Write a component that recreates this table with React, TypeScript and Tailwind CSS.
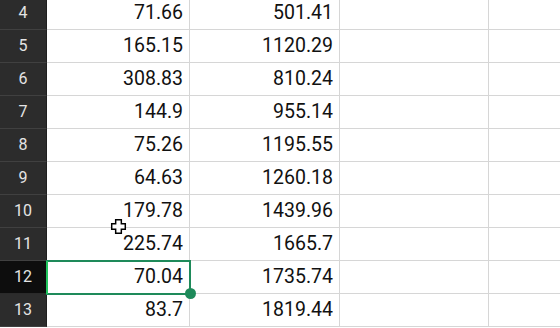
import React from "react";

const rows: [number, string, string][] = [
  [4, "71.66", "501.41"],
  [5, "165.15", "1120.29"],
  [6, "308.83", "810.24"],
  [7, "144.9", "955.14"],
  [8, "75.26", "1195.55"],
  [9, "64.63", "1260.18"],
  [10, "179.78", "1439.96"],
  [11, "225.74", "1665.7"],
  [12, "70.04", "1735.74"],
  [13, "83.7", "1819.44"],
];

export default function App() {
  return (
    <div
      className="relative w-[560px] h-[328px] overflow-hidden bg-white"
      style={{ fontFamily: "Roboto, 'Liberation Sans', sans-serif" }}
    >
      <div className="-mt-[3px] flex flex-col">
        {rows.map(([n, a, b]) => {
          const sel = n === 12;
          return (
            <div key={n} className="flex h-[33px]">
              <div
                className={
                  "w-[47px] shrink-0 flex items-center justify-center border-b border-r text-[16px] text-[#e4e4e4] " +
                  (sel
                    ? "bg-[#0d0d0d] border-b-[#2a2a2a] border-r-[#1e8a5a]"
                    : "bg-[#2c2c2c] border-b-[#404040] border-r-[#1f1f1f]")
                }
              >
                {n}
              </div>
              <div className="relative w-[143px] shrink-0 flex items-center justify-end pr-[6px] border-b border-r border-[#d6d6d6] text-[19.5px] text-[#111]">
                {a}
              </div>
              <div className="w-[150px] shrink-0 flex items-center justify-end pr-[6px] border-b border-r border-[#d6d6d6] text-[19.5px] text-[#111]">
                {b}
              </div>
              <div className="w-[149px] shrink-0 border-b border-r border-[#d6d6d6]" />
              <div className="flex-1 border-b border-[#d6d6d6]" />
            </div>
          );
        })}
      </div>

      {/* selection rectangle */}
      <div className="absolute left-[46px] top-[260px] w-[145px] h-[35px] border-2 border-[#1e8a5a]" />
      <div className="absolute left-[46px] top-[261px] w-[2px] h-[33px] bg-[#22c55e]" />
      <div className="absolute left-[185px] top-[288px] w-[11px] h-[11px] rounded-full bg-[#1e8a5a]" />

      {/* cursor */}
      <svg
        className="absolute left-[110px] top-[218px]"
        width="17"
        height="17"
        viewBox="0 0 15 15"
      >
        <path
          d="M5 1.5 H10 V5 H13.5 V10 H10 V13.5 H5 V10 H1.5 V5 H5 Z"
          fill="white"
          stroke="black"
          strokeWidth="1.3"
        />
      </svg>
    </div>
  );
}
